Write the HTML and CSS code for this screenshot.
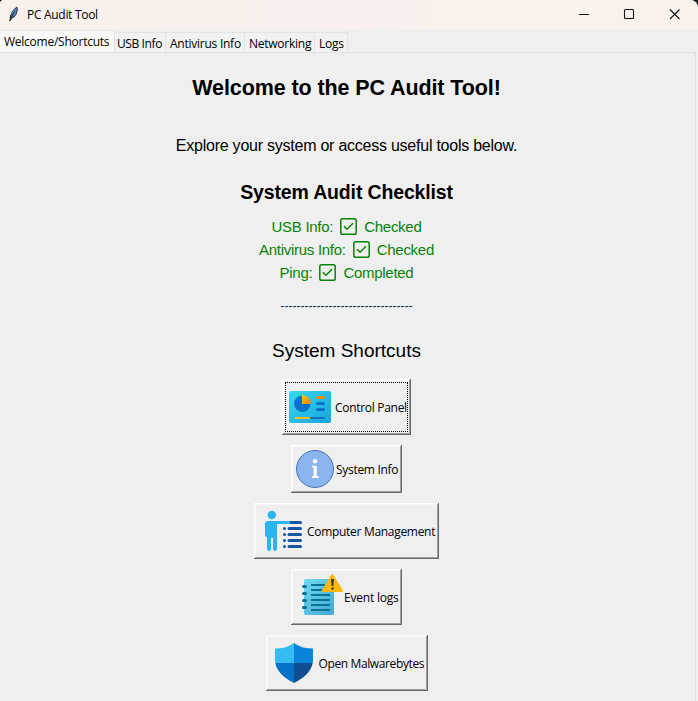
FILE: index.html
```
<!DOCTYPE html>
<html lang="en">
<head>
<meta charset="utf-8">
<title>PC Audit Tool</title>
<link rel="stylesheet" href="styles.css">
</head>
<body>
<div class="desktop">
<div class="window">
  <header class="titlebar">
    <svg class="feather" width="10" height="16" viewBox="0 0 12 18" preserveAspectRatio="none"><path d="M1.200 16.500 2 10.500Q3.500 4.500 9.500 1.200 11 4 8.400 9.400 6.800 12.700 3.400 13.600Z" fill="#4b88c6" stroke="#172434" stroke-width="1.100"/><path d="M1 16.800Q4 10 7.500 4.200" fill="none" stroke="#111" stroke-width="1"/><path d="M3.200 8.500 8.200 3" stroke="#8bc0ec" stroke-width="1"/></svg>
    <span class="caption">PC Audit Tool</span>
    <svg class="controls" width="104" height="12" viewBox="0 0 104 12" fill="none" stroke="#111" stroke-width="1.100"><path d="M1 6.500h10"/><rect x="46.500" y="1.500" width="9" height="9" rx="1"/><path d="m92 1.500 9.500 9.500m0-9.500L92 11"/></svg>
  </header>
  <nav class="tabs">
    <span class="tab active">Welcome/Shortcuts</span>
    <span class="tab w2">USB Info</span>
    <span class="tab w3">Antivirus Info</span>
    <span class="tab w4">Networking</span>
    <span class="tab w5">Logs</span>
  </nav>
  <main class="page">
    <h1>Welcome to the PC Audit Tool!</h1>
    <p class="intro">Explore your system or access useful tools below.</p>
    <h2>System Audit Checklist</h2>
    <div class="check">USB Info: <svg class="box" width="17" height="17" viewBox="0 0 17 17"><rect x=".8" y=".8" width="15.400" height="15.400" rx="1.800"/><path d="m4 8.300 3 3 6-6"/></svg> Checked</div>
    <div class="check">Antivirus Info: <svg class="box" width="17" height="17" viewBox="0 0 17 17"><rect x=".8" y=".8" width="15.400" height="15.400" rx="1.800"/><path d="m4 8.300 3 3 6-6"/></svg> Checked</div>
    <div class="check">Ping: <svg class="box" width="17" height="17" viewBox="0 0 17 17"><rect x=".8" y=".8" width="15.400" height="15.400" rx="1.800"/><path d="m4 8.300 3 3 6-6"/></svg> Completed</div>
    <div class="rule">---------------------------------</div>
    <h3>System Shortcuts</h3>
    <div class="shortcuts">
      <button class="b1">
        <svg width="48" height="48" viewBox="0 0 48 48"><defs><linearGradient id="cp" x2="1" y2="1"><stop stop-color="#36d8f1"/><stop offset="1" stop-color="#18a5db"/></linearGradient><linearGradient id="or" x2="1" y2="1"><stop stop-color="#ffc90e"/><stop offset="1" stop-color="#ee7d08"/></linearGradient></defs><rect x="3" y="8" width="42" height="32" rx="2" fill="url(#cp)"/><path d="M16 12.500a8.200 8.200 0 1 0 8.500 8.500H16Z" fill="#0870c9"/><path d="M16 12a9 9 0 0 1 9 9h-9Z" fill="url(#or)"/><g stroke-width="3" stroke-linecap="round"><path d="M31.500 14.500h6" stroke="#ee8b0c"/><path d="M31.500 20.500h6M31.500 26.500h6" stroke="#0870c9"/></g><path d="M9 35h15" stroke="#ffb90b" stroke-width="2"/><path d="M24 35h15" stroke="#0870c9" stroke-width="2"/></svg>
        <span>Control Panel</span>
      </button>
      <button class="b2">
        <svg width="40" height="40" viewBox="0 0 40 40"><circle cx="20" cy="20" r="18.500" fill="#8ab5ef" stroke="#4777b4" stroke-width="1"/><circle cx="20" cy="12.300" r="2.200" fill="#fff"/><path d="M16.800 16.800h5v10.100l2 .7V29h-7v-1.400l1.800-.7v-8.200l-1.800-.6Z" fill="#fff"/></svg>
        <span>System Info</span>
      </button>
      <button class="b3">
        <svg width="48" height="48" viewBox="0 0 48 48"><circle cx="13.800" cy="8" r="4.200" fill="#2bb5ee"/><path d="M10 14h22v3H19v25q0 2-2 2t-2-2V31h-2v11q0 2-2 2t-2-2V30q-2 0-2-2V17q0-3 3-3Z" fill="#2bb5ee"/><path d="M32 14h10.500q1.500 0 1.500 1.500T42.500 17H32Z" fill="#15589f"/><path d="M31 21.500h11.500M31 27.500h11.500M31 33.500h11.500M31 39.500h11.500M26.500 21.500h.01M26.500 27.500h.01M26.500 33.500h.01M26.500 39.500h.01" stroke="#15589f" stroke-width="3" stroke-linecap="round"/></svg>
        <span>Computer Management</span>
      </button>
      <button class="b4">
        <svg width="48" height="48" viewBox="0 0 48 48"><defs><linearGradient id="nb" x2="1" y2="1"><stop stop-color="#70d9ef"/><stop offset="1" stop-color="#42a8d1"/></linearGradient></defs><rect x="9" y="6" width="30" height="36" rx="2" fill="url(#nb)"/><g stroke="#087198" stroke-width="2"><path d="M16 12h14M16 17h19M16 22h19M16 27h19M16 32h19M16 37h19"/><path d="M8.500 13.500h2M8.500 20.500h2M8.500 27.500h2M8.500 34.500h2" stroke-width="3" stroke-linecap="round"/></g><path d="M36.500 1.500q.8-.8 1.600 0L48 17.500q0 1.500-1 1.500H27q-1 0-.5-1Z" fill="#ffb80b"/><path d="M36 6h3l-.6 7h-1.800Z" fill="#3b3934"/><circle cx="37.500" cy="15.500" r="1.300" fill="#3b3934"/></svg>
        <span>Event logs</span>
      </button>
      <button class="b5">
        <svg width="48" height="48" viewBox="0 0 48 48"><defs><clipPath id="sh"><path d="M24 4Q31 9.500 43 9.500V22Q42 35 24 44 6 35 5 22V9.500Q17 9.500 24 4Z"/></clipPath></defs><g clip-path="url(#sh)"><path d="M5 4h19v20H5Z" fill="#35bdf1"/><path d="M24 4h19v20H24Z" fill="#0b83d9"/><path d="M5 24h19v20H5Z" fill="#0572ca"/><path d="M24 24h19v20H24Z" fill="#114e91"/></g></svg>
        <span>Open Malwarebytes</span>
      </button>
    </div>
  </main>
</div>
</div>
</body>
</html>
```
FILE: styles.css
```
* { box-sizing: border-box; }
body { margin: 0; background: #202125; }
.desktop { width: 698px; height: 701px; overflow: hidden; }
.window {
  height: 701px;
  background: #efefef;
  border-radius: 4px 8px 0 0;
  overflow: hidden;
  font-family: "Open Sans", "Noto Sans", sans-serif;
  font-size: 12px;
  color: #000;
}
.titlebar {
  height: 30px;
  display: flex;
  align-items: center;
  padding: 0 16px 2px 9px;
  background: linear-gradient(90deg, #f8f1ec 0, #f8f0ec 45%, #f9f0ef 50%, #f8f1ec 62%);
}
.caption { margin-left: 8px; flex: 1; font-size: 12px; letter-spacing: -.3px; padding-top: 1px; }
.tabs { height: 22px; display: flex; align-items: flex-end; white-space: nowrap; }
.tab {
  height: 20px;
  background: #f2f2f2;
  border: 1px solid #e3e3e3;
  border-left: 0;
  border-bottom: 0;
  padding-left: 2px;
  line-height: 21px;
  letter-spacing: -.25px;
}
.tab.active { width: 115px; height: 22px; background: #f9f9f9; padding-left: 4px; line-height: 22px; }
.w2 { width: 51px; letter-spacing: -.4px; }
.w3 { width: 79px; padding-left: 4px; }
.w4 { width: 70px; padding-left: 4px; }
.w5 { width: 33px; padding-left: 4px; }
.page {
  width: 696px;
  height: 649px;
  border-top: 1px solid #e2e2e2;
  border-right: 1px solid #e2e2e2;
  padding-right: 2px;
  text-align: center;
  font-family: "Liberation Sans", Arial, sans-serif;
}
h1, h2, h3, p { margin: 0; }
h1 { font-size: 21.5px; line-height: 24px; padding-top: 23px; letter-spacing: -.1px; }
.intro { font-size: 16px; line-height: 18px; margin-top: 37px; letter-spacing: -.24px; }
h2 { font-size: 19.5px; line-height: 22px; margin-top: 26px; letter-spacing: -.15px; }
.check {
  display: flex;
  justify-content: center;
  align-items: center;
  gap: 7px;
  height: 23px;
  color: #078307;
  font-size: 15px;
  letter-spacing: -.28px;
}
h2 + .check { margin-top: 12px; }
.box { fill: none; stroke: #078307; stroke-width: 1.5; }
.rule { color: #063052; font-size: 12px; line-height: 14px; margin-top: 15px; }
h3 { font-size: 19px; font-weight: 400; line-height: 22px; margin-top: 27px; }
.shortcuts { display: flex; flex-direction: column; align-items: center; gap: 10px; margin-top: 17px; }
button {
  display: flex;
  align-items: center;
  height: 56px;
  border: 0;
  padding: 0 0 0 4px;
  background: #efefef;
  box-shadow: inset -1px -1px #696969, inset 1px 1px #fff, inset -2px -2px #a0a0a0, inset 2px 2px #f7f7f7;
  font-family: "Open Sans", "Noto Sans", sans-serif;
  font-size: 12px;
  color: #000;
  white-space: nowrap;
}
button svg { flex: none; }
button span { margin-left: 1px; letter-spacing: -.3px; }
.b1 { width: 129px; outline: 1px dotted #000; outline-offset: -4px; }
.b2 { width: 111px; height: 48px; }
.b3 { width: 185px; }
.b4 { width: 111px; }
.b4 span { letter-spacing: -.2px; }
.b5 { width: 162px; }
.b5 span { letter-spacing: -.38px; }
```
